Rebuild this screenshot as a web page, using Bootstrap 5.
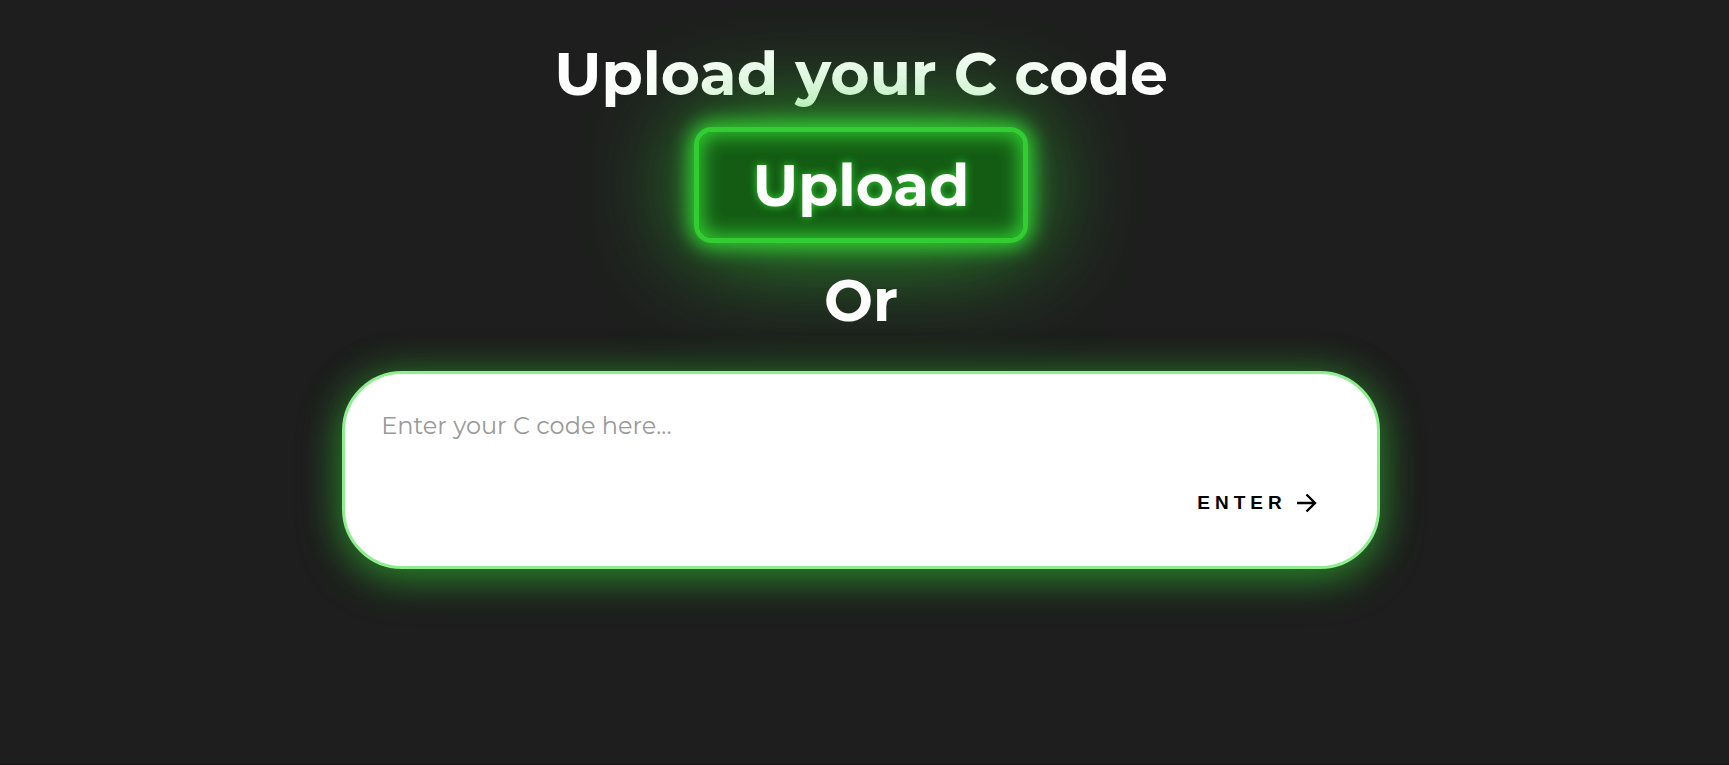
<!DOCTYPE html>
<html lang="en">
<head>
<meta charset="utf-8">
<meta name="viewport" content="width=device-width, initial-scale=1">
<title>Upload your C code</title>
<link rel="stylesheet" href="https://cdn.jsdelivr.net/npm/bootstrap@5.3.0/dist/css/bootstrap.min.css">
<style>
  body {
    background: #1e1e1e;
    color: #fff;
    font-family: Montserrat, Inter, sans-serif;
    border-bottom: 2px solid #1f191e;
  }
  main { padding: 36px 7px 0 0; }
  .headline { font-size: 60px; line-height: 76px; font-weight: 700; }
  .upload-btn, .upload-btn:hover {
    width: 334px;
    height: 116px;
    margin-top: 15px;
    padding: 2px 0 0;
    color: #fff;
    font-size: 58px;
    line-height: 76px;
    font-weight: 700;
    background: #145c14;
    border: 5px solid #32cd32;
    border-radius: 18px;
    text-shadow: 0 0 8px #32cd32;
    box-shadow: inset 0 0 20px 3px #32cd32, 0 0 20px 5px #32cd32, 0 0 110px rgba(50, 205, 50, .9);
  }
  .or-line { font-size: 58px; margin-top: 20px; }
  .code-box {
    width: 60vw;
    height: 198px;
    margin-top: 32px;
    padding: 36px 36px 51px;
    background: #fff;
    border: 3px solid #90ee90;
    border-radius: 60px;
    box-shadow: 0 0 40px rgba(50, 205, 50, .25), 0 10px 40px rgba(50, 205, 50, .5);
  }
  .code-input {
    color: #222;
    font-size: 24px;
    line-height: 32px;
    resize: none;
    outline: 0;
  }
  .code-input::placeholder { color: #999; }
  .enter-btn {
    gap: 10px;
    font-family: "Liberation Sans", sans-serif;
    font-size: 19px;
    line-height: 24px;
    font-weight: 700;
    letter-spacing: 5px;
    color: #000;
    margin-right: 24px;
  }
</style>
</head>
<body class="min-vh-100">
<main class="d-flex flex-column align-items-center text-center">
  <h1 class="headline m-0">Upload your C code</h1>
  <button type="button" class="upload-btn btn position-relative">Upload</button>
  <h2 class="headline or-line mb-0 position-relative">Or</h2>
  <form class="code-box d-flex flex-column position-relative">
    <textarea class="code-input border-0 bg-transparent p-0 w-100 flex-fill" aria-label="C code" placeholder="Enter your C code here..."></textarea>
    <button type="button" class="enter-btn btn border-0 p-0 d-flex align-items-center align-self-end">ENTER
      <svg width="20" height="20" viewBox="0 0 20 20" fill="none" stroke="currentColor" stroke-width="2.4" aria-hidden="true"><path d="M0 10H18M9.500 1.500L18 10L9.500 18.500"/></svg>
    </button>
  </form>
</main>
<script src="https://cdn.jsdelivr.net/npm/bootstrap@5.3.0/dist/js/bootstrap.bundle.min.js"></script>
</body>
</html>
